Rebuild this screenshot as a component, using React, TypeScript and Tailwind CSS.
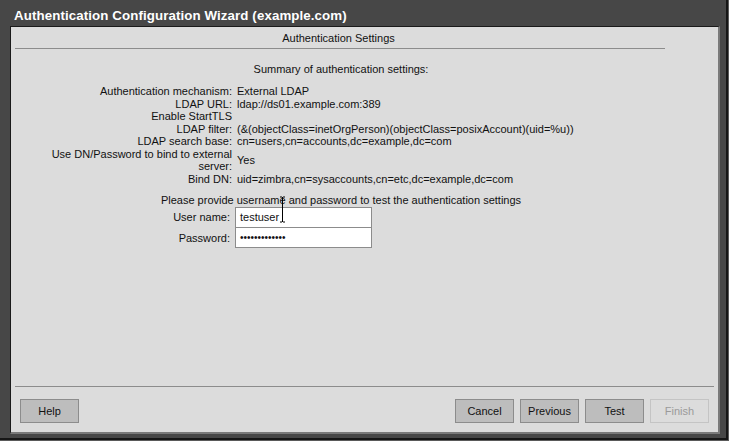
import React from 'react';

const rows: { label: string; value: string }[] = [
  { label: 'Authentication mechanism:', value: 'External LDAP' },
  { label: 'LDAP URL:', value: 'ldap://ds01.example.com:389' },
  { label: 'Enable StartTLS', value: '' },
  { label: 'LDAP filter:', value: '(&(objectClass=inetOrgPerson)(objectClass=posixAccount)(uid=%u))' },
  { label: 'LDAP search base:', value: 'cn=users,cn=accounts,dc=example,dc=com' },
  { label: 'Use DN/Password to bind to external server:', value: 'Yes' },
  { label: 'Bind DN:', value: 'uid=zimbra,cn=sysaccounts,cn=etc,dc=example,dc=com' },
];

function Button({ label, disabled }: { label: string; disabled?: boolean }) {
  return (
    <div
      className={
        disabled
          ? 'w-[59px] h-[24px] flex items-center justify-center border border-[#c4c4c4] bg-[#dcdcdc] text-[#9a9a9a]'
          : 'w-[59px] h-[24px] flex items-center justify-center border border-[#8c8c8c] bg-[#bdbdbd] text-[#111]'
      }
    >
      {label}
    </div>
  );
}

export default function App() {
  return (
    <div
      className="w-[729px] h-[441px] bg-[#5a5a5a] text-[11px] text-[#111]"
      style={{ fontFamily: '"Liberation Sans", Arial, sans-serif' }}
    >
      <div className="relative w-[728px] h-[440px] bg-[#474747] border-r-2 border-b-2 border-[#161616] flex flex-col">
        <div className="h-[26px] pl-[14px] pt-[7px] text-[13.3px] font-bold text-white leading-[17px] tracking-[0.1px]">
          Authentication Configuration Wizard (example.com)
        </div>

        <div className="ml-[10px] w-[710px] h-[408px] bg-[#dcdcdc] border-t border-l border-[#1a1a1a] border-r-2 border-b-2 border-r-[#7a7a7a] border-b-[#7a7a7a] flex flex-col">
          <div className="w-[655px] h-[21px] leading-[21px] pt-px text-center">Authentication Settings</div>
          <div className="ml-[4px] w-[650px] h-px bg-[#8c8c8c]" />

          <div className="w-[660px] mt-[14px] leading-[13px] text-center">Summary of authentication settings:</div>

          <div className="mt-[9px] ml-[32px] grid grid-cols-[189px_auto] gap-x-[5px] leading-[12.5px]">
            {rows.map((r) => (
              <React.Fragment key={r.label}>
                <div className="text-right">{r.label}</div>
                <div className="flex items-center whitespace-nowrap">{r.value}</div>
              </React.Fragment>
            ))}
          </div>

          <div className="w-[660px] mt-[9px] leading-[13px] text-center">
            Please provide username and password to test the authentication settings
          </div>

          <div className="ml-[32px] grid grid-cols-[189px_137px] gap-x-[3px]">
            <div className="h-[21px] flex items-center justify-end pr-[2px]">User name:</div>
            <div className="h-[21px] bg-white border border-[#8c8c8c] flex items-center pl-[4px]">testuser</div>
            <div className="h-[20px] flex items-center justify-end pr-[2px]">Password:</div>
            <div className="h-[20px] bg-white border border-t-0 border-[#8c8c8c] flex items-center pl-[4px] text-[10px] tracking-[0px]">
              •••••••••••••
            </div>
          </div>

          <div className="mt-auto mx-[4px] h-px bg-[#8c8c8c]" />
          <div className="h-[45px] flex items-start pt-[12px] pl-[9px] pr-[9px]">
            <Button label="Help" />
            <div className="flex-1" />
            <div className="flex gap-[6px]">
              <Button label="Cancel" />
              <Button label="Previous" />
              <Button label="Test" />
              <Button label="Finish" disabled />
            </div>
          </div>
        </div>

        <svg className="absolute left-[279px] top-[196px]" width="7" height="27" viewBox="0 0 7 27">
          <path d="M1 1h2M4 1h2M3.5 1v25M1 26h2M4 26h2" stroke="#000" strokeWidth="1" fill="none" />
        </svg>
      </div>
    </div>
  );
}
